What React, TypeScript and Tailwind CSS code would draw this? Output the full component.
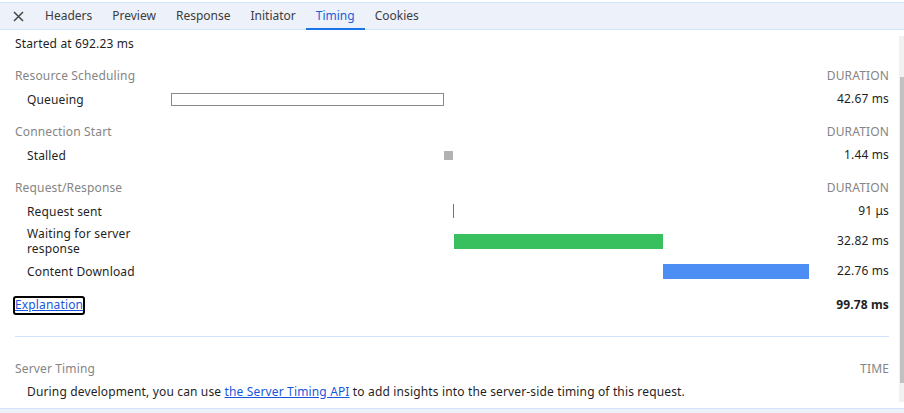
import React from "react";

const tabs = ["Headers", "Preview", "Response", "Initiator", "Timing", "Cookies"];

const TOTAL = 99.78;
const AREA = 638;

type Row = { label: string; start: number; dur: number; kind: "queue" | "stall" | "sent" | "wait" | "dl"; text: string };

const sections: { title: string; rows: Row[] }[] = [
  {
    title: "Resource Scheduling",
    rows: [{ label: "Queueing", start: 0, dur: 42.67, kind: "queue", text: "42.67 ms" }],
  },
  {
    title: "Connection Start",
    rows: [{ label: "Stalled", start: 42.67, dur: 1.44, kind: "stall", text: "1.44 ms" }],
  },
  {
    title: "Request/Response",
    rows: [
      { label: "Request sent", start: 44.11, dur: 0.091, kind: "sent", text: "91 μs" },
      { label: "Waiting for server response", start: 44.2, dur: 32.82, kind: "wait", text: "32.82 ms" },
      { label: "Content Download", start: 77.02, dur: 22.76, kind: "dl", text: "22.76 ms" },
    ],
  },
];

const barClass: Record<Row["kind"], string> = {
  queue: "h-[13px] border border-[#8a8a8a] bg-white",
  stall: "h-[9px] bg-[#b2b2b2]",
  sent: "h-[14px] bg-[#1a97b3]",
  wait: "h-[15px] bg-[#38bf5e]",
  dl: "h-[15px] bg-[#4d8ef5]",
};

const Bar: React.FC<{ row: Row }> = ({ row }) => {
  const left = (row.start / TOTAL) * AREA;
  const width = Math.max(1, (row.dur / TOTAL) * AREA);
  return (
    <div className="flex items-center w-[638px] h-full">
      <div className={barClass[row.kind]} style={{ marginLeft: left, width }} />
    </div>
  );
};

export default function App() {
  return (
    <div
      className="w-[904px] h-[413px] overflow-hidden bg-white text-[12px] text-[#1f1f1f] flex flex-col"
      style={{ fontFamily: '"Noto Sans", "Noto Sans CJK SC", sans-serif' }}
    >
      <div className="h-[2px]" />
      {/* tab strip */}
      <div className="h-[28px] flex items-stretch bg-[#edf1fa] border-t border-b border-[#d3e3fd]">
        <div className="w-[35px] flex items-center justify-center pl-[2px]">
          <svg width="11" height="11" viewBox="0 0 11 11" fill="none" stroke="#474747" strokeWidth="1.5">
            <path d="M1 1L10 10M10 1L1 10" />
          </svg>
        </div>
        {tabs.map((t) => (
          <div
            key={t}
            className={
              "px-[10px] flex items-center border-b-2 -mb-px " +
              (t === "Timing" ? "text-[#1a62d6] border-[#1a73e8]" : "text-[#3c3c3c] border-transparent")
            }
          >
            {t}
          </div>
        ))}
      </div>

      <div className="flex-1 flex min-h-0">
        <div className="flex-1 pl-[15px] pr-[10px] pt-[1px] flex flex-col tracking-[0.15px]">
          <div className="h-[24px] pt-[2px] flex items-center">Started at 692.23 ms</div>

          {sections.map((s) => (
            <div key={s.title} className="mt-[8px] flex flex-col">
              <div className="h-[24px] pt-[2px] flex items-center justify-between text-[#858585]">
                <span>{s.title}</span>
                <span>DURATION</span>
              </div>
              {s.rows.map((r) => (
                <div key={r.label} className={"flex items-center " + (r.kind === "wait" ? "h-[36px]" : "h-[24px]")}>
                  <div className="w-[156px] pl-[12px] pr-[14px] leading-[15px]">{r.label}</div>
                  <Bar row={r} />
                  <div className="flex-1 text-right">{r.text}</div>
                </div>
              ))}
            </div>
          ))}

          <div className="mt-[10px] h-[24px] flex items-center justify-between">
            <a className="-ml-[2px] h-[19px] flex items-center border-2 border-black rounded-[3px] text-[#1a56db] underline leading-none">
              Explanation
            </a>
            <span className="font-bold">99.78 ms</span>
          </div>

          <div className="mt-[19px] h-px bg-[#d3e3fd]" />

          <div className="mt-[19px] h-[24px] pt-[2px] flex items-center justify-between text-[#858585]">
            <span>Server Timing</span>
            <span>TIME</span>
          </div>
          <div className="h-[24px] flex items-center pl-[12px]">
            <span>
              During development, you can use{" "}
              <a className="text-[#1a56db] underline">the Server Timing API</a> to add insights into the server-side
              timing of this request.
            </span>
          </div>
        </div>

        {/* scrollbar */}
        <div className="w-[5px] flex flex-col pt-[6px] pb-[6px]">
          <div className="flex-1 bg-[#f1f1f1] flex flex-col items-end pt-[41px] pb-[19px]">
            <div className="flex-1 w-[4px] bg-[#c1c1c1]" />
          </div>
        </div>
      </div>

      <div className="h-[5px] bg-[#edf1fa] border-t border-[#d3e3fd]" />
    </div>
  );
}
